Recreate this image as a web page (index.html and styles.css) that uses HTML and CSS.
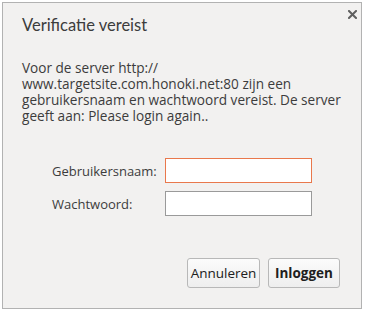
FILE: index.html
```html
<!DOCTYPE html>
<html lang="nl">
<head>
  <meta charset="UTF-8">
  <meta name="viewport" content="width=device-width, initial-scale=1.0">
  <title>Verificatie vereist</title>
  <link rel="stylesheet" href="styles.css">
</head>
<body>
  <div class="dialog">
    <button class="close" type="button" aria-label="Sluiten">
      <svg width="9" height="9" viewBox="0 0 9 9">
        <path d="M1 1 L8 8 M8 1 L1 8" stroke="#5f5f5f" stroke-width="2" stroke-linecap="square"/>
      </svg>
    </button>

    <h1 class="title">Verificatie vereist</h1>

    <p class="message">
      Voor de server http://<br>
      www.targetsite.com.honoki.net:80 zijn een<br>
      gebruikersnaam en wachtwoord vereist. De server<br>
      geeft aan: Please login again..
    </p>

    <!-- Inlogvelden -->
    <div class="form">
      <label class="label" for="user">Gebruikersnaam:</label>
      <input class="field focused" id="user" type="text">
      <label class="label" for="pass">Wachtwoord:</label>
      <input class="field" id="pass" type="password">
    </div>

    <div class="buttons">
      <button class="button" type="button">Annuleren</button>
      <button class="button default" type="button">Inloggen</button>
    </div>
  </div>
</body>
</html>
```

FILE: styles.css
```css
body {
  margin: 0;
  background: #ffffff;
  font-family: 'Open Sans', 'Noto Sans', sans-serif;
  color: #3c3c3c;
}

/* Dialoogvenster */
.dialog {
  position: relative;
  box-sizing: border-box;
  width: 360px;
  height: 307px;
  margin: 2px 0 0 2px;
  padding: 12px 19px 0 19px;
  background: #f2f1f0;
  border: 1px solid #b2b2b2;
  box-shadow: 0 1px 0 #dcdcdc;
}

.close {
  position: absolute;
  top: 7px;
  right: 4px;
  width: 9px;
  height: 9px;
  padding: 0;
  border: none;
  background: none;
  line-height: 0;
  cursor: pointer;
}

.title {
  margin: 0;
  font-family: 'Lato', 'Open Sans', sans-serif;
  font-size: 16.5px;
  font-weight: normal;
  line-height: 20px;
}

.message {
  margin: 25px 0 0 0;
  font-size: 13.6px;
  line-height: 16px;
}

/* Formulier */
.form {
  display: grid;
  grid-template-columns: 113px 147px;
  row-gap: 8px;
  align-items: center;
  margin: 34px 0 0 30px;
}

.label {
  font-size: 13px;
}

.field {
  box-sizing: border-box;
  width: 147px;
  height: 25px;
  margin: 0;
  border: 1px solid #9a9a9a;
  background: #ffffff;
  outline: none;
}

.field.focused {
  border-color: #e9784c;
}

.buttons {
  display: flex;
  justify-content: flex-end;
  gap: 8px;
  margin-top: 42px;
  padding-right: 2px;
}

.button {
  box-sizing: border-box;
  width: 73px;
  height: 30px;
  padding: 0;
  border: 1px solid #b8b8b8;
  border-radius: 3px;
  background: linear-gradient(#fbfbfb, #eeeeee);
  font-family: 'Open Sans', 'Noto Sans', sans-serif;
  font-size: 13.5px;
  color: #202020;
  cursor: pointer;
}

.button.default {
  width: 72px;
  font-weight: bold;
}
```
